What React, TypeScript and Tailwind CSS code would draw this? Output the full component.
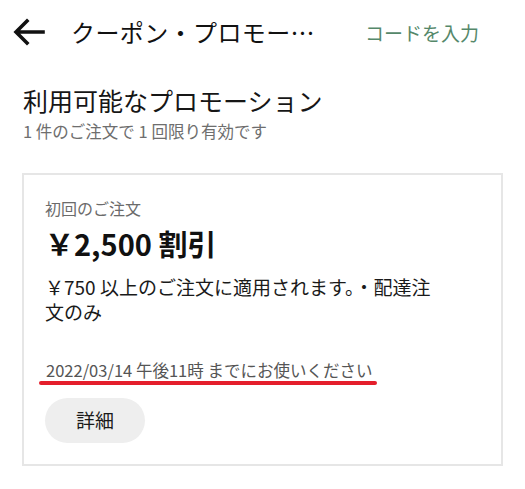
const jp = "font-['Noto_Sans_CJK_JP','Noto_Sans',sans-serif]";

function BackArrow() {
  return (
    <svg width="32" height="28" viewBox="0 0 32 28" fill="none">
      <path
        d="M30 14H4M14 3L3 14l11 11"
        stroke="#111"
        strokeWidth="3.6"
        strokeLinecap="square"
      />
    </svg>
  );
}

export default function App() {
  return (
    <div className={`w-[525px] h-[489px] bg-white overflow-hidden ${jp}`}>
      {/* Header */}
      <div className="flex items-center h-[64px] pl-[13px] pr-[46px]">
        <BackArrow />
        <div className="ml-[26px] text-[24px] leading-none text-[#111] whitespace-nowrap tracking-[0.4px]">
          クーポン・プロモー…
        </div>
        <div className="ml-auto text-[19px] leading-none text-[#55886a] whitespace-nowrap">
          コードを入力
        </div>
      </div>

      {/* Section heading */}
      <div className="px-[23px] pt-[22px]">
        <h1 className="text-[25px] leading-[28px] text-[#161616]">
          利用可能なプロモーション
        </h1>
        <p className="mt-[7px] text-[16.5px] leading-[20px] text-[#6e6e6e]">
          1 件のご注文で 1 回限り有効です
        </p>
      </div>

      {/* Promotion card */}
      <div className="mx-[22px] mt-[32px] border-2 border-[#e6e6e6] pl-[21px] pr-[60px] pt-[22px] pb-[21px]">
        <div className="text-[16px] leading-[22px] text-[#6b6b6b]">初回のご注文</div>
        <div className="mt-[7px] text-[29px] leading-[34px] font-bold text-[#111]">
          ￥2,500 割引
        </div>
        <p className="mt-[14px] text-[19px] leading-[25px] text-[#1a1a1a]">
          ￥750 以上のご注文に適用されます。・配達注文のみ
        </p>
        <div className="mt-[36px] inline-block">
          <div className="text-[16.5px] leading-[20px] text-[#555] pl-[1px]">
            2022/03/14 午後11時 までにお使いください
          </div>
          <div className="mt-[1px] -ml-[6px] h-[4px] w-[338px] rounded-full bg-[#e41e2b]" />
        </div>
        <div>
          <button className="mt-[13px] w-[100px] h-[45px] rounded-full bg-[#eeeeee] text-[19px] text-[#1a1a1a]">
            詳細
          </button>
        </div>
      </div>
    </div>
  );
}
